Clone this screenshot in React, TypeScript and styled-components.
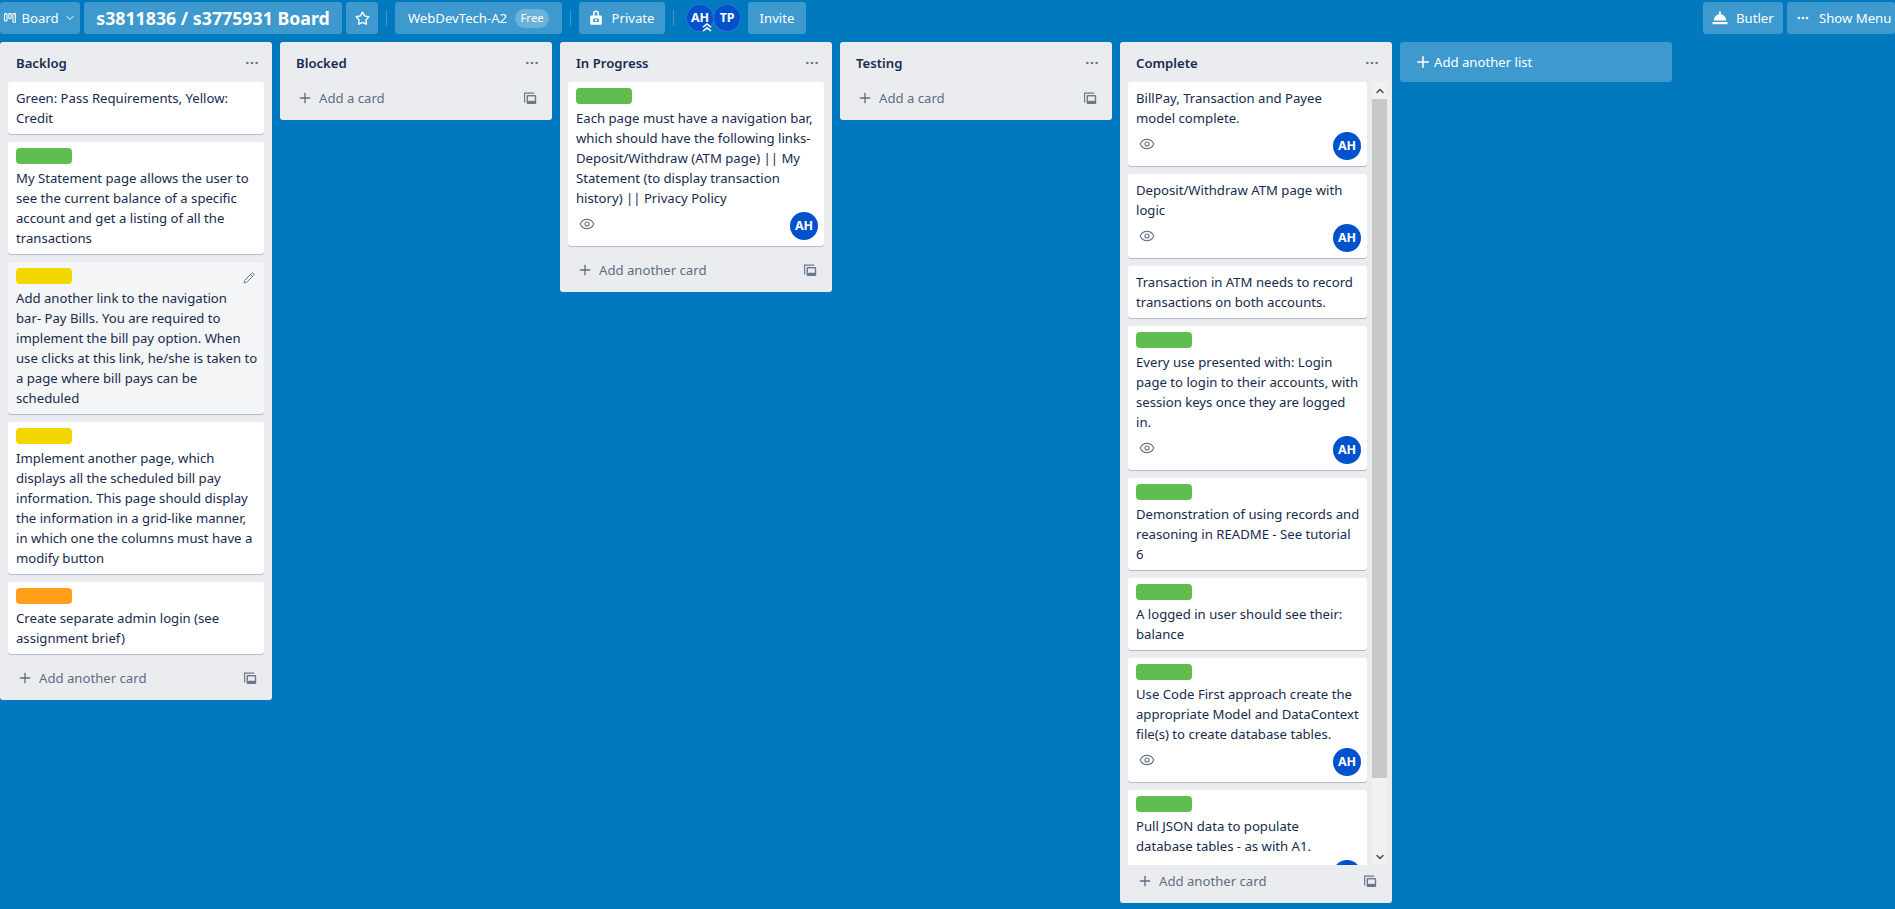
import React from 'react'
import styled, { createGlobalStyle } from 'styled-components'
import { ChevronDown, ChevronUp, Ellipsis, Eye, Pencil, Plus, Star } from 'lucide-react'

const GlobalStyle = createGlobalStyle`
  html, body { margin: 0; padding: 0; }
  body {
    background: #0079bf;
    font-family: "Noto Sans", "Open Sans", sans-serif;
    font-size: 13.15px;
    line-height: 20px;
    color: #172b4d;
    overflow: hidden;
  }
`

type CardData = {
  label?: string
  text: string
  watched?: boolean
  hover?: boolean
}

const GREEN = '#61bd4f'
const YELLOW = '#f2d600'
const ORANGE = '#ff9f1a'

const backlog: CardData[] = [
  { text: 'Green: Pass Requirements, Yellow:\nCredit' },
  { label: GREEN, text: 'My Statement page allows the user to\nsee the current balance of a specific\naccount and get a listing of all the\ntransactions' },
  { label: YELLOW, hover: true, text: 'Add another link to the navigation\nbar- Pay Bills. You are required to\nimplement the bill pay option. When\nuse clicks at this link, he/she is taken to\na page where bill pays can be\nscheduled' },
  { label: YELLOW, text: 'Implement another page, which\ndisplays all the scheduled bill pay\ninformation. This page should display\nthe information in a grid-like manner,\nin which one the columns must have a\nmodify button' },
  { label: ORANGE, text: 'Create separate admin login (see\nassignment brief)' },
]

const inProgress: CardData[] = [
  { label: GREEN, watched: true, text: 'Each page must have a navigation bar,\nwhich should have the following links-\nDeposit/Withdraw (ATM page) || My\nStatement (to display transaction\nhistory) || Privacy Policy' },
]

const complete: CardData[] = [
  { watched: true, text: 'BillPay, Transaction and Payee\nmodel complete.' },
  { watched: true, text: 'Deposit/Withdraw ATM page with\nlogic' },
  { text: 'Transaction in ATM needs to record\ntransactions on both accounts.' },
  { label: GREEN, watched: true, text: 'Every use presented with: Login\npage to login to their accounts, with\nsession keys once they are logged\nin.' },
  { label: GREEN, text: 'Demonstration of using records and\nreasoning in README - See tutorial\n6' },
  { label: GREEN, text: 'A logged in user should see their:\nbalance' },
  { label: GREEN, watched: true, text: 'Use Code First approach create the\nappropriate Model and DataContext\nfile(s) to create database tables.' },
  { label: GREEN, watched: true, text: 'Pull JSON data to populate\ndatabase tables - as with A1.' },
]

const BoardIcon = () => (
  <svg width="12" height="12" viewBox="0 0 12 12" fill="none" stroke="#fff" strokeWidth="1.1">
    <rect x="0.6" y="1.6" width="2.4" height="7.4" rx="0.5" />
    <rect x="4.8" y="1.6" width="2.4" height="5" rx="0.5" />
    <rect x="9" y="1.6" width="2.4" height="8.6" rx="0.5" />
  </svg>
)

const LockIcon = () => (
  <svg width="12" height="16" viewBox="0 0 12 16">
    <path fill="none" stroke="#fff" strokeWidth="1.6" d="M3.8 6V3.4a2.2 2.2 0 0 1 4.4 0V6" />
    <path fill="#fff" fillRule="evenodd" d="M1.2 5.6h9.6a1 1 0 0 1 1 1v7.2a1 1 0 0 1-1 1H1.2a1 1 0 0 1-1-1V6.6a1 1 0 0 1 1-1zM3.2 8.6v3.4h5.6V8.6z" />
    <rect x="5" y="9.4" width="2" height="1.8" fill="#fff" />
  </svg>
)

const ClocheIcon = () => (
  <svg width="16" height="14" viewBox="0 0 16 14" fill="#fff">
    <circle cx="8" cy="1.8" r="1.2" />
    <path d="M1.8 9.6C2.1 6 4.7 3 8 3s5.9 3 6.2 6.6z" />
    <rect x="0.5" y="11" width="15" height="2.2" rx="0.6" />
  </svg>
)

const TemplateIcon = () => (
  <svg width="14" height="13" viewBox="0 0 14 13" fill="none">
    <path stroke="#6b778c" strokeWidth="1.2" d="M1.6 10.6V1.2h9.6" />
    <rect x="3.6" y="3" width="9.6" height="9" rx="1" fill="#6b778c" />
    <rect x="5" y="4.4" width="6.8" height="4.4" fill="#ebecf0" />
  </svg>
)

const AdminChevrons = () => (
  <svg width="10" height="9" viewBox="0 0 10 9" fill="none" stroke="#fff" strokeWidth="1.6">
    <path d="M1 4.2 5 1l4 3.2" />
    <path d="M1 8 5 4.8 9 8" />
  </svg>
)

const Page = styled.div`
  width: 1895px;
  height: 909px;
  overflow: hidden;
`

const Header = styled.header`
  display: flex;
  align-items: center;
  gap: 4px;
  height: 32px;
  padding: 2px 0 8px;
`

const HeaderButton = styled.div<{ $width: number; $gap?: number }>`
  display: flex;
  align-items: center;
  justify-content: center;
  gap: ${p => p.$gap ?? 6}px;
  flex: none;
  width: ${p => p.$width}px;
  height: 32px;
  box-sizing: border-box;
  border-radius: 3px;
  background: rgba(255, 255, 255, 0.24);
  color: #fff;
  white-space: nowrap;
`

const BoardTitle = styled(HeaderButton)`
  font-size: 17.75px;
  font-weight: 700;
`

const IconLedButton = styled(HeaderButton)`
  justify-content: flex-start;
  padding-left: 9px;
`

const FreePill = styled.span`
  display: inline-flex;
  align-items: center;
  justify-content: center;
  width: 34px;
  height: 19px;
  border-radius: 10px;
  background: rgba(255, 255, 255, 0.24);
  font-size: 11.5px;
`

const Divider = styled.span<{ $after?: number }>`
  flex: none;
  width: 1px;
  height: 16px;
  margin: 0 ${p => p.$after ?? 4}px 0 4px;
  background: rgba(255, 255, 255, 0.24);
`

const HeaderMembers = styled.div`
  display: flex;
  flex: none;
  margin-right: 4px;
`

const Avatar = styled.span`
  position: relative;
  display: flex;
  align-items: center;
  justify-content: center;
  flex: none;
  width: 28px;
  height: 28px;
  border-radius: 50%;
  background: #0052cc;
  color: #fff;
  font-size: 12.5px;
  font-weight: 700;
  letter-spacing: -0.2px;
`

const HeaderAvatar = styled(Avatar)`
  box-sizing: border-box;
  margin-right: -1px;
  border: 1px solid rgba(255, 255, 255, 0.18);
`

const AdminBadge = styled.span`
  position: absolute;
  right: 1px;
  bottom: -1px;
  display: flex;
  line-height: 0;
`

const RightGroup = styled.div`
  display: flex;
  gap: 4px;
  margin-left: auto;
`

const Board = styled.main`
  display: flex;
  align-items: flex-start;
  gap: 8px;
`

const List = styled.section`
  flex: none;
  width: 272px;
  border-radius: 3px;
  background: #ebecf0;
`

const ListHeader = styled.div`
  display: flex;
  align-items: center;
  justify-content: space-between;
  height: 40px;
  box-sizing: border-box;
  padding: 2px 12px 0 16px;
  color: #172b4d;
  font-weight: 600;
`

const Dots = styled(Ellipsis)`
  color: #6b778c;
`

const CardStack = styled.div`
  display: flex;
  flex-direction: column;
  gap: 8px;
  padding: 0 8px 8px;
`

const ScrollArea = styled.div`
  display: flex;
  gap: 5px;
  height: 783px;
  padding-left: 8px;
`

const ScrollCards = styled.div`
  display: flex;
  flex: none;
  flex-direction: column;
  gap: 8px;
  width: 239px;
  height: 100%;
  overflow: hidden;
`

const ScrollTrack = styled.div`
  display: flex;
  flex: none;
  flex-direction: column;
  width: 15px;
  background: #f1f1f1;
`

const ScrollButton = styled.span`
  display: flex;
  align-items: center;
  justify-content: center;
  flex: none;
  height: 17px;
  color: #505050;
`

const ScrollThumb = styled.span`
  flex: none;
  height: 679px;
  background: #c8c8c8;
`

const ScrollRest = styled.span`
  flex: 1;
`

const CardBox = styled.article<{ $hover?: boolean }>`
  position: relative;
  flex: none;
  padding: 6px 8px;
  border-radius: 3px;
  background: ${p => (p.$hover ? '#f4f5f7' : '#fff')};
  box-shadow: 0 1px 0 rgba(9, 30, 66, 0.25);
`

const Label = styled.div<{ $color: string }>`
  width: 56px;
  height: 16px;
  margin-bottom: 4px;
  border-radius: 4px;
  background: ${p => p.$color};
`

const CardText = styled.div`
  white-space: pre;
`

const Badges = styled.div`
  display: flex;
  justify-content: space-between;
  margin: 4px -2px 0 3px;
`

const EyeIcon = styled(Eye)`
  margin-top: 4px;
  color: #6b778c;
`

const EditIcon = styled(Pencil)`
  position: absolute;
  top: 10px;
  right: 9px;
  color: #6b778c;
`

const Footer = styled.div`
  display: flex;
  align-items: center;
  height: 38px;
  box-sizing: border-box;
  padding: 2px 8px 8px;
`

const AddCard = styled.div`
  display: flex;
  align-items: center;
  flex: 1;
  gap: 6px;
  padding-left: 9px;
  color: #5e6c84;
`

const TemplateButton = styled.span`
  display: flex;
  align-items: center;
  justify-content: center;
  width: 28px;
  height: 28px;
`

const AddList = styled.div`
  display: flex;
  align-items: center;
  flex: none;
  gap: 2px;
  width: 272px;
  height: 40px;
  box-sizing: border-box;
  padding-left: 14px;
  border-radius: 3px;
  background: rgba(255, 255, 255, 0.24);
  color: #fff;
`

const Card = ({ label, text, watched, hover }: CardData) => (
  <CardBox $hover={hover}>
    {label && <Label $color={label} />}
    <CardText>{text}</CardText>
    {hover && <EditIcon size={12} strokeWidth={2} />}
    {watched && (
      <Badges>
        <EyeIcon size={16} strokeWidth={1.8} />
        <Avatar>AH</Avatar>
      </Badges>
    )}
  </CardBox>
)

const ListTop = ({ title }: { title: string }) => (
  <ListHeader>
    {title}
    <Dots size={16} />
  </ListHeader>
)

const ListFooter = ({ text }: { text: string }) => (
  <Footer>
    <AddCard>
      <Plus size={16} strokeWidth={2} />
      {text}
    </AddCard>
    <TemplateButton>
      <TemplateIcon />
    </TemplateButton>
  </Footer>
)

const App = () => {
  return (
    <Page>
      <GlobalStyle />
      <Header>
        <HeaderButton $width={80} $gap={5}>
          <BoardIcon />
          Board
          <ChevronDown size={12} />
        </HeaderButton>
        <BoardTitle $width={258}>s3811836 / s3775931 Board</BoardTitle>
        <HeaderButton $width={32}>
          <Star size={15} strokeWidth={2.2} />
        </HeaderButton>
        <Divider />
        <HeaderButton $width={167} $gap={8}>
          WebDevTech-A2
          <FreePill>Free</FreePill>
        </HeaderButton>
        <Divider />
        <HeaderButton $width={86} $gap={10}>
          <LockIcon />
          Private
        </HeaderButton>
        <Divider $after={8} />
        <HeaderMembers>
          <HeaderAvatar>
            AH
            <AdminBadge>
              <AdminChevrons />
            </AdminBadge>
          </HeaderAvatar>
          <HeaderAvatar>TP</HeaderAvatar>
        </HeaderMembers>
        <HeaderButton $width={58}>Invite</HeaderButton>
        <RightGroup>
          <IconLedButton $width={80} $gap={8}>
            <ClocheIcon />
            Butler
          </IconLedButton>
          <IconLedButton $width={108} $gap={9}>
            <Ellipsis size={14} strokeWidth={2.6} />
            Show Menu
          </IconLedButton>
        </RightGroup>
      </Header>
      <Board>
        <List>
          <ListTop title="Backlog" />
          <CardStack>
            {backlog.map(card => (
              <Card key={card.text} {...card} />
            ))}
          </CardStack>
          <ListFooter text="Add another card" />
        </List>
        <List>
          <ListTop title="Blocked" />
          <ListFooter text="Add a card" />
        </List>
        <List>
          <ListTop title="In Progress" />
          <CardStack>
            {inProgress.map(card => (
              <Card key={card.text} {...card} />
            ))}
          </CardStack>
          <ListFooter text="Add another card" />
        </List>
        <List>
          <ListTop title="Testing" />
          <ListFooter text="Add a card" />
        </List>
        <List>
          <ListTop title="Complete" />
          <ScrollArea>
            <ScrollCards>
              {complete.map(card => (
                <Card key={card.text} {...card} />
              ))}
            </ScrollCards>
            <ScrollTrack>
              <ScrollButton>
                <ChevronUp size={12} strokeWidth={3} />
              </ScrollButton>
              <ScrollThumb />
              <ScrollRest />
              <ScrollButton>
                <ChevronDown size={12} strokeWidth={3} />
              </ScrollButton>
            </ScrollTrack>
          </ScrollArea>
          <ListFooter text="Add another card" />
        </List>
        <AddList>
          <Plus size={18} strokeWidth={2} />
          Add another list
        </AddList>
      </Board>
    </Page>
  )
}

export default App
